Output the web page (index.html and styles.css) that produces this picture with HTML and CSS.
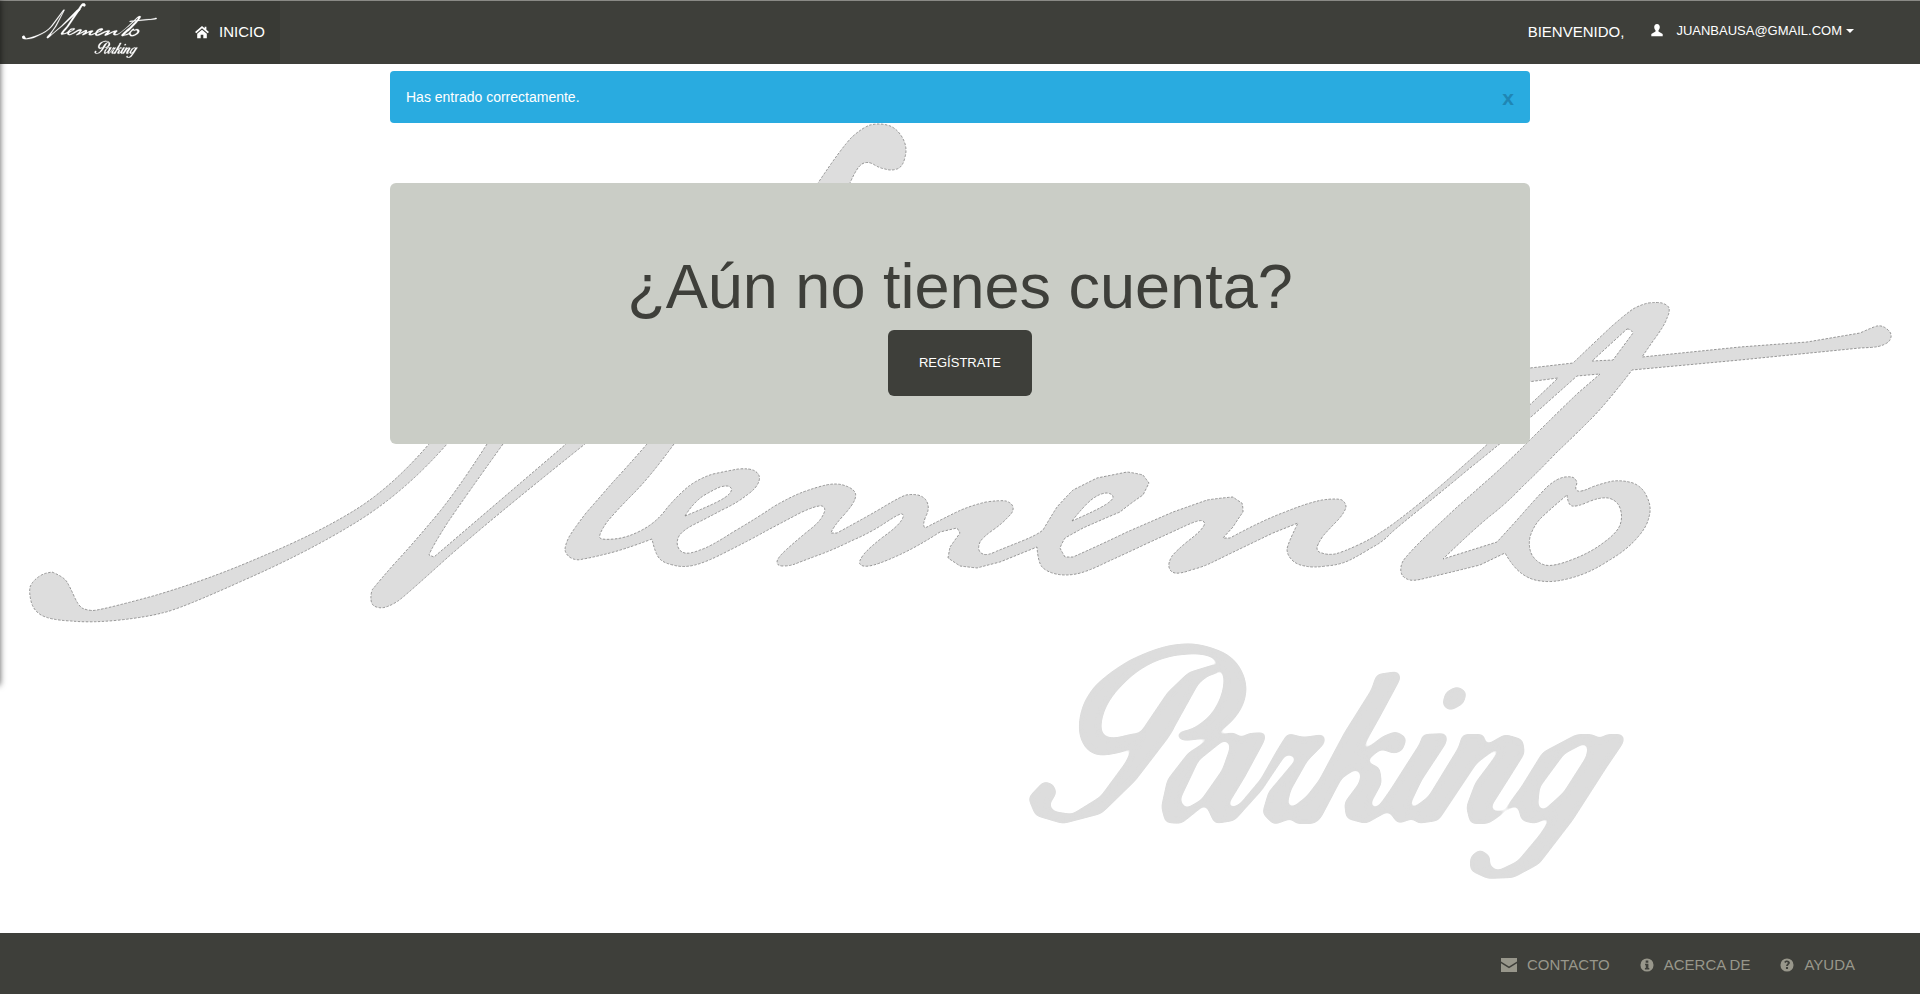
FILE: index.html
```html
<!DOCTYPE html>
<html lang="es">
<head>
    <meta charset="UTF-8">
    <meta name="viewport" content="width=device-width, initial-scale=1.0">
    <title>Memento Parking</title>
    <link rel="stylesheet" href="styles.css">
</head>

<body>
    <!-- Logo shapes, used by the watermark and by the navbar -->
    <svg class="watermark" viewBox="0 0 1920 994" aria-hidden="true">
        <defs>
            <g id="logo-memento">
                <path d="M52 572Q64 577 67 582Q70 587 74 596Q78 605 82 608Q86 610 92 610.5Q98 611 153 596Q208 580 263 556Q318 533 355 510Q392 487 429 444L600 215L620 215L503 444Q465 497 448 522Q432 547 429 555L434 557L566 444L790 215L840 210L585 444Q490 520 447 558Q404 597 398 601Q392 605 386 607Q380 609 374 606Q369 602 372 590Q380 580 395 563Q410 547 431 522Q453 497 487 444L600 235L447 444Q404 493 355 523Q306 553 242 581Q178 610 162 613Q147 617 120 620Q92 623 71 621Q50 620 41 615Q33 610 31 601Q29 593 30 587Q32 582 37 578Q42 574 47 573Z"/>
                <path fill-rule="evenodd" d="M674 444Q650 477 633 494Q617 510 607 522Q598 535 600 538Q602 540 614 539Q627 538 642 530Q657 522 667 508Q678 495 689 486Q700 478 713 474Q727 471 738 469Q750 468 755 471Q761 475 759 481Q757 488 747 495Q737 503 722 510Q707 518 695 524Q683 530 679 536Q676 542 678 547Q680 552 685 553Q690 554 700 550Q710 547 733 532Q757 518 773 507Q790 497 803 492Q817 487 826 485Q836 483 843 485Q850 487 853 490Q857 493 855 499Q853 505 843 516Q833 527 831 533L837 533Q870 515 885 506Q900 497 906 495Q912 494 918 495Q925 497 927 502Q930 508 926 516Q922 525 925 528Q950 515 961 510Q973 505 986 502Q1000 500 1006 501Q1012 503 1013 507Q1014 512 1008 517Q1003 523 993 530Q983 537 980 542Q978 547 979 550Q980 553 983 554Q987 556 997 551Q1007 547 1022 541Q1037 535 1043 530Q1050 518 1057 507Q1065 498 1073 490Q1085 484 1097 478Q1112 475 1127 472Q1135 473 1143 475Q1146 479 1149 483Q1146 489 1143 495Q1131 503 1120 512Q1101 520 1083 528Q1074 533 1065 538Q1062 543 1060 548Q1062 552 1065 557Q1069 557 1073 557Q1100 545 1127 532Q1150 522 1173 512Q1190 506 1207 500Q1220 498 1233 497Q1237 500 1242 503Q1243 507 1243 512Q1238 519 1233 527L1223 538L1230 538Q1263 520 1285 512Q1307 503 1322 500Q1337 498 1342 500Q1346 503 1346 507Q1345 512 1338 520Q1330 528 1323 536Q1317 545 1317 548Q1317 552 1322 553Q1327 555 1335 554Q1343 552 1358 545Q1373 538 1381 532Q1390 527 1415 507Q1440 487 1463 466Q1487 445 1508 425Q1530 405 1558 378L1520 383L1510 376L1530 368L1573 363Q1597 340 1612 326Q1627 313 1633 309Q1640 305 1648 303Q1657 302 1662 303Q1668 305 1669 308Q1670 312 1667 318Q1665 325 1653 341L1642 357L1740 347L1807 342L1860 333Q1873 327 1877 326Q1882 325 1887 329Q1892 333 1891 337Q1890 342 1885 344Q1880 347 1870 347.5L1860 348L1740 360L1632 370Q1607 403 1590 420Q1573 437 1556 453Q1540 470 1523 486Q1507 503 1490 516Q1473 530 1443 559L1497 542L1517 520Q1537 497 1547 487Q1557 478 1565 477Q1573 476 1575 479Q1578 482 1576 486Q1575 490 1578 491Q1582 492 1592 487Q1603 483 1613 481Q1623 480 1633 483Q1643 487 1647 497Q1652 507 1649 517Q1647 527 1637 538Q1627 550 1608 561Q1590 573 1571 578Q1553 583 1541 581Q1530 580 1521 573Q1513 567 1505 553L1480 565Q1440 575 1426 578Q1412 582 1407 579Q1402 577 1401 572Q1400 567 1403 561Q1407 555 1423 539Q1440 523 1456 508Q1473 493 1490 478Q1507 463 1532 438Q1557 413 1578 393L1600 374L1577 376Q1530 418 1515 431Q1500 444 1470 468Q1440 493 1420 509Q1400 525 1391 533Q1383 542 1371 548Q1360 555 1350 560Q1340 565 1326 566Q1313 568 1305 566Q1297 565 1292 560Q1287 555 1287 549Q1288 543 1298 523L1273 533Q1223 557 1213 562Q1203 567 1191 570Q1180 574 1175 573Q1170 572 1169 567Q1168 563 1172 556Q1177 550 1188 541Q1200 532 1203 527Q1206 523 1203 521Q1200 519 1185 526Q1170 533 1148 543Q1127 553 1107 562Q1087 572 1076 574Q1065 576 1056 574Q1047 572 1042 567Q1038 562 1037 547L1000 562Q988 565 977 568Q968 567 960 566Q954 562 948 558Q949 552 950 547Q955 540 960 533L957 528L940 532Q917 547 897 556Q877 565 869 566Q862 567 860 564Q858 562 864 554Q870 547 883 537Q897 527 901 521Q905 515 902 514Q900 513 885 523Q870 533 851 541Q833 550 816 556Q800 562 795 564Q790 566 783 566Q777 566 777 562Q777 558 787 549Q797 540 808 531Q820 522 823 515Q827 508 822 506Q817 505 800 513Q783 522 766 531Q750 540 728 551Q707 562 695 565Q683 568 673 565Q663 563 659 558Q655 553 652 539Q623 550 606 554Q590 558 583 559Q577 561 571 558Q566 555 565 550Q565 545 569 537Q573 530 586 513Q600 497 613 482Q627 467 647 444L818 183Q842 147 852 137Q862 128 870 125Q879 123 887 125Q896 127 902 137Q908 147 905 157Q903 167 897 169Q891 171 885 169Q879 168 873 164Q867 161 862 164Q857 167 850 183ZM685 516Q693 503 703 496Q713 490 720 487Q728 485 730 487Q733 489 730 493Q727 497 717 502Q707 507 685 516ZM1072 521Q1083 507 1091 500Q1100 493 1107 493Q1113 494 1113 497Q1113 500 1105 505Q1097 510 1072 521ZM1567 495Q1568 505 1572 506Q1577 507 1588 502Q1600 497 1608 498Q1617 500 1620 508Q1623 517 1620 525Q1617 533 1603 543Q1590 553 1571 560Q1553 567 1545 565Q1537 563 1532 555Q1528 547 1530 537Q1533 527 1540 519Q1547 512 1567 495ZM1627 329Q1631 329 1633 333L1613 360L1592 361Z"/>
            </g>
            <g id="logo-parking">
                <path d="M1044 782L1029 798L1036 815L1063 823L1101 813L1135 780L1168 737L1198 683L1208 675L1219 672L1215 665L1189 673L1168 693L1143 730L1126 763L1101 797L1072 815L1053 812L1048 805L1056 793L1053 785Z"/>
                <path d="M1139 733L1118 738Q1103 740 1101 732Q1099 723 1104 710Q1109 697 1122 684Q1135 670 1152 662Q1168 655 1183 654Q1198 652 1208 655Q1219 658 1223 670Q1227 683 1221 698Q1215 713 1205 721Q1194 730 1187 731Q1179 732 1178 735Q1177 737 1181 739Q1185 741 1200 738Q1215 735 1228 724Q1240 713 1244 700Q1248 687 1242 673Q1236 660 1223 653Q1210 647 1197 645Q1185 643 1166 647Q1147 652 1128 662Q1109 673 1096 686Q1084 700 1081 715Q1078 730 1082 740Q1086 750 1094 753Q1103 757 1126 750Z"/>
                <path fill-rule="evenodd" d="M1162 807L1168 780L1189 753L1215 737L1234 733L1241 739L1248 734L1265 733L1264 740L1244 777L1227 805L1229 810L1240 805L1261 780L1278 750L1288 734L1303 738L1324 735L1324 743L1307 760L1290 790L1286 807L1293 808L1307 797L1320 780L1345 733L1372 690L1377 675L1398 672L1400 678L1379 717L1356 758L1383 737L1396 732L1406 738L1402 750L1394 753L1381 748L1364 762L1379 768L1381 783L1370 803L1370 810L1379 807L1391 790L1421 743L1423 735L1446 734L1446 742L1421 780L1408 807L1412 810L1429 797L1459 748L1463 735L1484 735L1484 747L1505 735L1522 740L1524 753L1509 777L1490 807L1492 813L1505 810L1522 787L1543 753L1577 735L1593 735L1600 740L1606 735L1623 735L1623 742L1606 767L1572 820L1539 863L1513 877L1488 878L1471 870L1471 857L1480 850L1490 857L1488 865L1497 872L1518 862L1539 837L1556 812L1535 823L1522 820L1518 803L1488 823L1471 823L1467 807L1476 783L1501 750L1499 745L1476 763L1438 820L1417 823L1415 817L1398 823L1389 810L1366 823L1347 818L1345 803L1360 783L1362 772L1356 768L1341 778L1320 818L1314 823L1295 823L1293 817L1274 824L1263 813L1269 793L1299 757L1286 753L1261 790L1234 820L1215 823L1206 803L1181 823L1166 822ZM1229 740L1223 740L1198 760L1179 800L1185 810L1202 800L1223 770L1231 747ZM1585 742L1564 753L1539 787L1537 807L1543 812L1564 793L1587 757L1589 745Z"/>
                <path d="M1457 687L1446 693L1443 705L1450 710L1463 703L1466 692Z"/>
            </g>
            <!-- Rounds the corners of the traced outline -->
            <filter id="soft-edge" x="-5%" y="-5%" width="110%" height="110%">
                <feGaussianBlur stdDeviation="3"/>
                <feComponentTransfer>
                    <feFuncA type="linear" slope="10" intercept="-4.5"/>
                </feComponentTransfer>
                <feGaussianBlur stdDeviation="0.6"/>
            </filter>
        </defs>
        <use href="#logo-memento" class="mark-memento"/>
        <use href="#logo-parking" class="mark-parking"/>
    </svg>

    <div class="edge-shadow"></div>

    <nav class="topbar">
        <a class="brand" href="#" aria-label="Memento Parking">
            <svg class="brand-logo" viewBox="29 123 1864 757" aria-hidden="true">
                <use href="#logo-memento"/>
                <use href="#logo-parking"/>
            </svg>
        </a>
        <a class="nav-link active" href="#">
            <svg class="icon" viewBox="0 0 16 16"><path d="M8 1L0 8L1.5 9.5L8 3.8L14.5 9.5L16 8L13 5.4V2H11V3.6ZM8 5.3L2.5 10V15H6.5V11H9.5V15H13.5V10Z"/></svg>
            <span>INICIO</span>
        </a>
        <div class="nav-right">
            <span class="welcome">BIENVENIDO,</span>
            <a class="user-menu" href="#">
                <svg class="icon" viewBox="0 0 16 16"><path d="M8 1C5.8 1 4.8 2.7 4.8 4.5C4.8 6.3 5.6 7.7 6.3 8.4V9.8L1.5 12.5V15H14.5V12.5L9.7 9.8V8.4C10.4 7.7 11.2 6.3 11.2 4.5C11.2 2.7 10.2 1 8 1Z"/></svg>
                <span>JUANBAUSA@GMAIL.COM</span>
                <span class="caret"></span>
            </a>
        </div>
    </nav>

    <main class="content">
        <div class="alert">
            <span>Has entrado correctamente.</span>
            <button class="close">x</button>
        </div>

        <section class="signup">
            <h1>¿Aún no tienes cuenta?</h1>
            <a class="signup-btn" href="#">REGÍSTRATE</a>
        </section>
    </main>

    <footer class="footer">
        <a class="footer-link" href="#">
            <svg class="icon" viewBox="0 0 16 14"><path d="M0 0H16V3.5L8 8.5L0 3.5ZM0 5.2L8 10.2L16 5.2V14H0Z"/></svg>
            <span>CONTACTO</span>
        </a>
        <a class="footer-link" href="#">
            <svg class="icon" viewBox="0 0 16 16"><path fill-rule="evenodd" d="M8 0.5A7.5 7.5 0 1 0 8 15.5A7.5 7.5 0 1 0 8 0.5ZM6.5 2.8H9.5V5.4H6.5ZM5.8 6.6H9.6V11.4H10.6V13.2H5.6V11.4H6.6V8.4H5.8Z"/></svg>
            <span>ACERCA DE</span>
        </a>
        <a class="footer-link" href="#">
            <svg class="icon" viewBox="0 0 16 16"><path fill-rule="evenodd" d="M8 0.5A7.5 7.5 0 1 0 8 15.5A7.5 7.5 0 1 0 8 0.5ZM8 2.8C10 2.8 11.3 3.9 11.3 5.5C11.3 7.4 9.2 7.6 9.2 9.2H6.9C6.9 6.9 8.9 6.7 8.9 5.6C8.9 5 8.5 4.7 7.9 4.7C7.2 4.7 6.7 5.1 6.4 5.7L4.7 4.6C5.3 3.5 6.4 2.8 8 2.8ZM6.8 10.2H9.2V12.6H6.8Z"/></svg>
            <span>AYUDA</span>
        </a>
    </footer>
</body>
</html>
```

FILE: styles.css
```css
* {
    box-sizing: border-box;
}
html, body {
    height: 100%;
}
body {
    margin: 0;
    height: 100vh;
    display: flex;
    flex-direction: column;
    position: relative;
    overflow: hidden;
    background-color: #fff;
    font-family: "Liberation Sans", Arial, sans-serif;
    font-size: 14px;
    color: #3e3f3a;
}
a {
    color: inherit;
    text-decoration: none;
}
.icon {
    display: block;
    fill: currentColor;
    flex: none;
}

/* Big logo behind the page */
.watermark {
    position: absolute;
    top: 0;
    left: 0;
    width: 1920px;
    height: 994px;
}
.mark-memento {
    fill: #ddd;
    stroke: #808080;
    stroke-width: 0.8;
    stroke-dasharray: 2.5 1.5;
}
.mark-parking {
    fill: #ddd;
    stroke: #ddd;
    stroke-width: 2;
    stroke-linejoin: round;
    filter: url(#soft-edge);
}

.edge-shadow {
    position: absolute;
    top: 0;
    left: -10px;
    width: 10px;
    height: 685px;
    z-index: 5;
    box-shadow: 0 0 6px rgba(0, 0, 0, 0.65);
}

/* Navbar */
.topbar {
    position: relative;
    flex: none;
    height: 64px;
    display: flex;
    align-items: stretch;
    background-color: #3e3f3a;
    border-top: 1px solid #8a8a86;
    color: #fff;
    font-size: 15px;
}
.brand {
    width: 180px;
    padding: 2px 0 0 22px;
}
.brand-logo {
    display: block;
    width: 135px;
    height: 55px;
    fill: #fff;
    stroke: #fff;
    stroke-width: 3;
}
.nav-link {
    width: 100px;
    display: flex;
    align-items: center;
    gap: 10px;
    padding: 0 0 2px 15px;
}
.nav-link .icon {
    width: 14px;
    height: 14px;
}
.nav-link.active {
    background-color: #393a35;
}
.nav-right {
    margin-left: auto;
    padding: 0 66px 2px 0;
    display: flex;
    align-items: center;
}
.welcome {
    margin-right: 26px;
}
.user-menu {
    display: flex;
    align-items: center;
    font-size: 13px;
    margin-top: -2px;
}
.user-menu .icon {
    width: 14px;
    height: 14px;
    margin-right: 12px;
    margin-top: -2px;
}
.caret {
    width: 0;
    height: 0;
    margin-left: 4px;
    border-top: 4px solid #fff;
    border-left: 4px solid transparent;
    border-right: 4px solid transparent;
}

/* Main column */
.content {
    position: relative;
    flex: 1;
    width: 1140px;
    margin: 0 auto;
    padding-top: 7px;
}
.alert {
    height: 52px;
    display: flex;
    align-items: center;
    justify-content: space-between;
    padding: 0 16px;
    margin-bottom: 60px;
    border-radius: 4px;
    background-color: #29abe0;
    color: #fff;
}
.close {
    padding: 0;
    border: 0;
    background: none;
    font-family: inherit;
    font-size: 21px;
    font-weight: bold;
    line-height: 1;
    color: #1f86b4;
    cursor: pointer;
}
.signup {
    height: 261px;
    padding-top: 69px;
    border-radius: 6px;
    background-color: #cacdc6;
    text-align: center;
}
.signup h1 {
    margin: 0 0 9px;
    font-size: 63px;
    font-weight: 400;
    line-height: 69px;
    color: #3e3f3a;
}
.signup-btn {
    display: inline-block;
    width: 144px;
    height: 66px;
    line-height: 66px;
    border-radius: 6px;
    background-color: #3e3f3a;
    color: #fff;
    font-size: 13px;
}

/* Footer */
.footer {
    position: relative;
    flex: none;
    height: 61px;
    display: flex;
    justify-content: flex-end;
    align-items: center;
    gap: 30px;
    padding: 2px 65px 0 0;
    background-color: #3e3f3a;
    color: #98978b;
    font-size: 15px;
}
.footer-link {
    display: flex;
    align-items: center;
    gap: 10px;
}
.footer-link .icon {
    width: 14px;
    height: 14px;
}
.footer-link:first-child .icon {
    width: 16px;
}
```
